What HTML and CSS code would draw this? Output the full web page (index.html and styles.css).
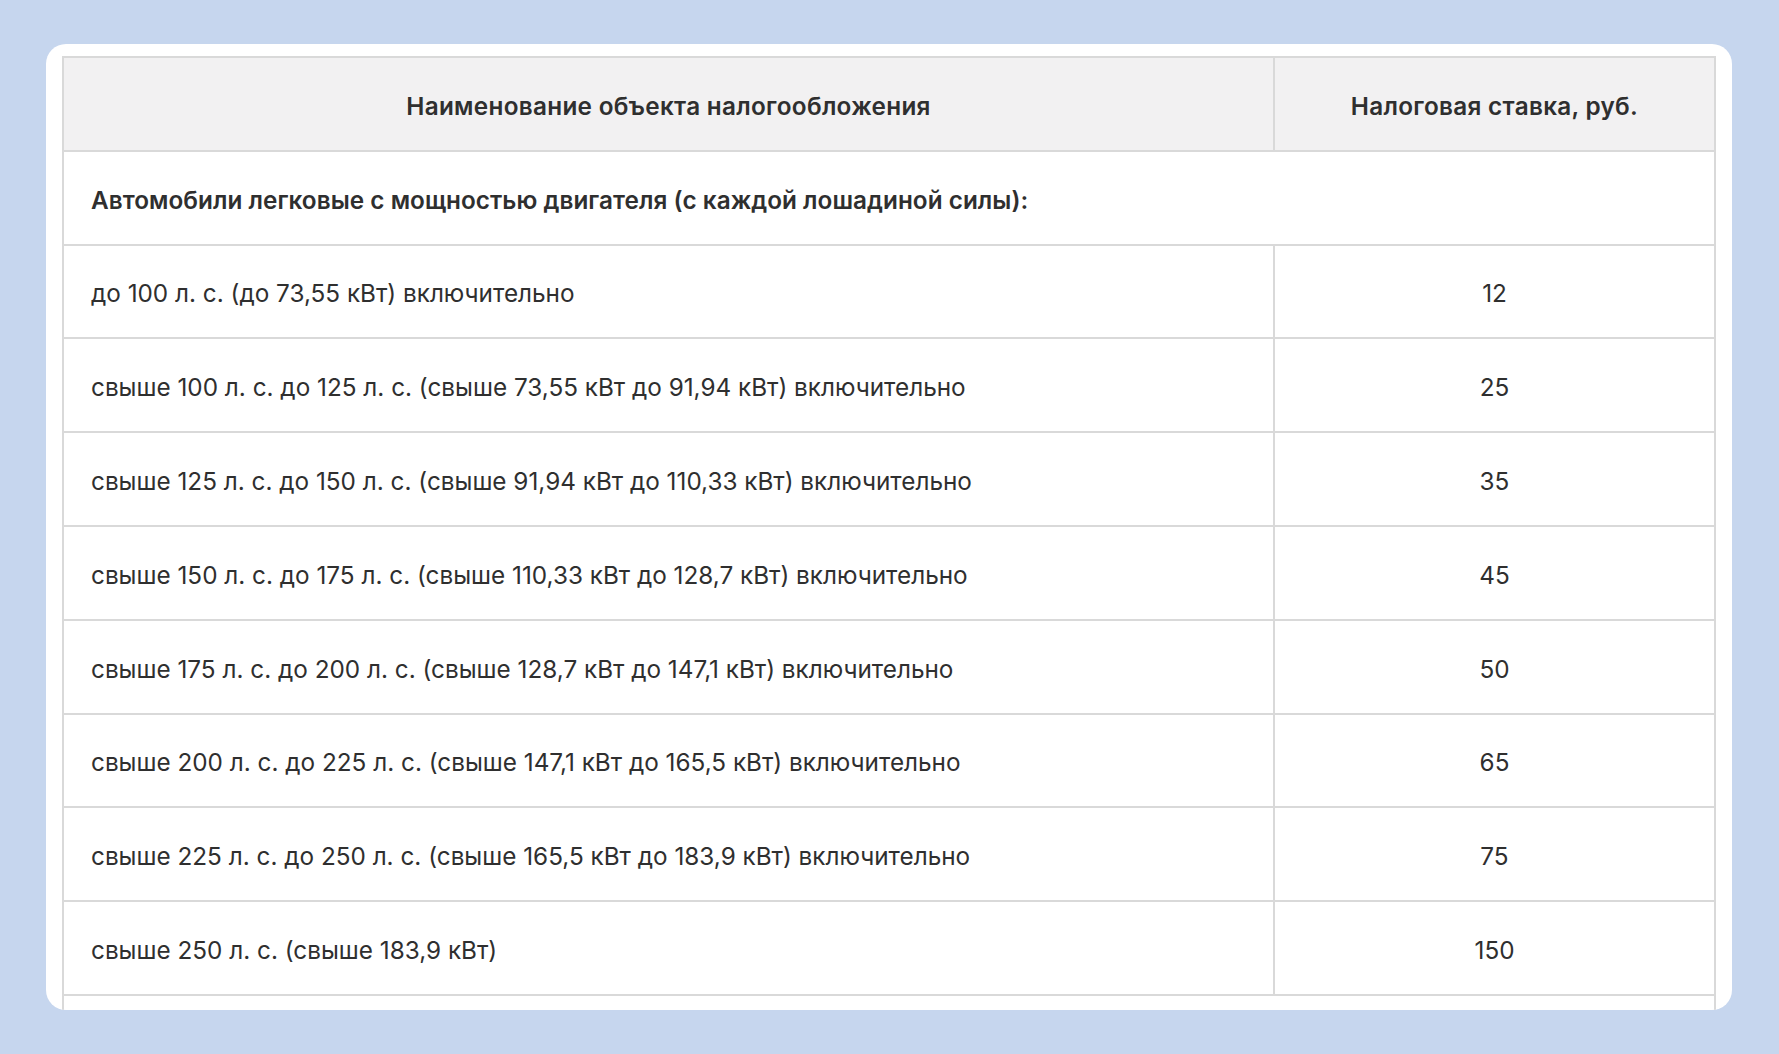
FILE: index.html
```html
<!DOCTYPE html>
<html lang="ru">
<head>
<meta charset="utf-8">
<title>Налоговые ставки</title>
<link rel="stylesheet" href="styles.css">
</head>
<body>
<div class="card">
  <table class="tax">
    <colgroup><col class="c-name"><col class="c-rate"></colgroup>
    <thead>
      <tr><th>Наименование объекта налогообложения</th><th>Налоговая ставка, руб.</th></tr>
    </thead>
    <tbody>
      <tr class="group"><td colspan="2">Автомобили легковые с мощностью двигателя (с каждой лошадиной силы):</td></tr>
      <tr><td>до 100 л. с. (до 73,55 кВт) включительно</td><td>12</td></tr>
      <tr><td>свыше 100 л. с. до 125 л. с. (свыше 73,55 кВт до 91,94 кВт) включительно</td><td>25</td></tr>
      <tr><td>свыше 125 л. с. до 150 л. с. (свыше 91,94 кВт до 110,33 кВт) включительно</td><td>35</td></tr>
      <tr><td>свыше 150 л. с. до 175 л. с. (свыше 110,33 кВт до 128,7 кВт) включительно</td><td>45</td></tr>
      <tr><td>свыше 175 л. с. до 200 л. с. (свыше 128,7 кВт до 147,1 кВт) включительно</td><td>50</td></tr>
      <tr><td>свыше 200 л. с. до 225 л. с. (свыше 147,1 кВт до 165,5 кВт) включительно</td><td>65</td></tr>
      <tr><td>свыше 225 л. с. до 250 л. с. (свыше 165,5 кВт до 183,9 кВт) включительно</td><td>75</td></tr>
      <tr><td>свыше 250 л. с. (свыше 183,9 кВт)</td><td>150</td></tr>
      <tr class="next"><td colspan="2"></td></tr>
    </tbody>
  </table>
</div>
</body>
</html>
```
FILE: styles.css
```css
html, body { margin: 0; padding: 0; }
body {
  background: #c6d6ee;
  font-family: "Inter", "Noto Sans", sans-serif;
  color: #2f2f2f;
  height: 1054px;
  overflow: hidden;
}
.card {
  margin: 44px 0 0 46px;
  width: 1686px;
  height: 966px;
  box-sizing: border-box;
  padding: 12px 18px 0 16px;
  background: #ffffff;
  border-radius: 20px;
  overflow: hidden;
}
.tax {
  width: 1652px;
  border-collapse: collapse;
  table-layout: fixed;
  font-size: 24.3px;
}
.c-name { width: 1211px; }
.c-rate { width: 441px; }
.tax th, .tax td {
  border: 2px solid #d9d9d9;
  padding: 5px 0 0 0;
  vertical-align: middle;
  line-height: 1.2;
}
.tax tr { height: 93.8px; }
.tax th {
  background: #f2f1f2;
  font-weight: 600;
  text-align: center;
  letter-spacing: 0.3px;
}
.tax td { font-weight: 400; }
.tax td:first-child { padding-left: 27px; text-align: left; }
.tax td:nth-child(2) { text-align: center; }
.tax .group td { font-weight: 600; letter-spacing: 0.04px; }
```
